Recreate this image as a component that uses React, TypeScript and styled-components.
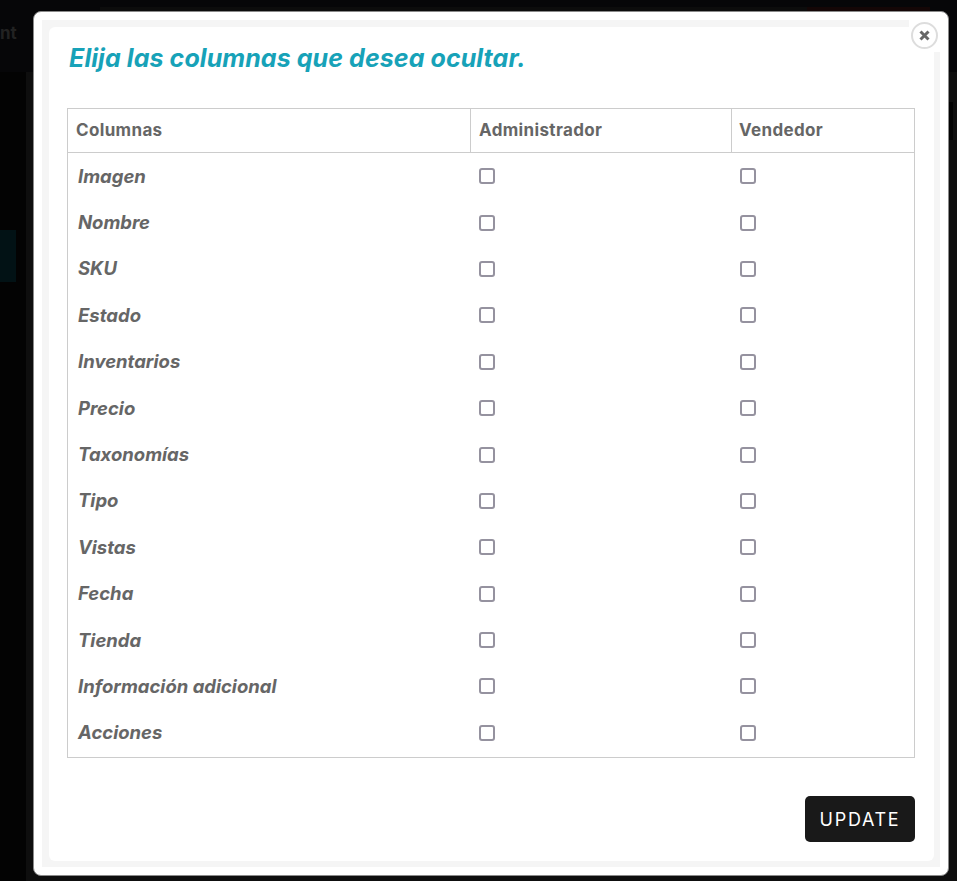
import React from 'react';
import styled, { createGlobalStyle } from 'styled-components';

const ROWS = [
  'Imagen',
  'Nombre',
  'SKU',
  'Estado',
  'Inventarios',
  'Precio',
  'Taxonomías',
  'Tipo',
  'Vistas',
  'Fecha',
  'Tienda',
  'Información adicional',
  'Acciones',
];

const GlobalStyle = createGlobalStyle`
  html, body {
    margin: 0;
    height: 100%;
    background: #050505;
    overflow: hidden;
  }
`;

const Page = styled.div`
  position: relative;
  height: 881px;
  display: grid;
  grid-template-rows: 72px 1fr;
  font-family: 'Inter', 'Liberation Sans', sans-serif;
`;

const PageHeader = styled.div`
  display: flex;
  align-items: center;
  padding-bottom: 6px;
  box-sizing: border-box;
  font-size: 17px;
  font-weight: 700;
  color: #222;
  background:
    linear-gradient(#0c0c0c, #0c0c0c) 100px 7px / 707px 5px no-repeat,
    linear-gradient(#140606, #140606) 807px 7px / 123px 5px no-repeat,
    #060608;
`;

const PageBody = styled.div`
  display: flex;
  background: #0e0e0e;
`;

const Sidebar = styled.div`
  width: 26px;
  padding-top: 158px;
  box-sizing: border-box;
  background: #030303;
`;

const SidebarActive = styled.div`
  width: 16px;
  height: 52px;
  background: #021215;
`;

const RightRail = styled.div`
  margin-left: auto;
  width: 8px;
  padding-top: 30px;
  box-sizing: border-box;
`;

const RailBlock = styled.div`
  width: 4px;
  height: 38px;
  background: #020202;
`;

const Modal = styled.div`
  position: absolute;
  left: 33px;
  top: 11px;
  width: 916px;
  height: 865px;
  box-sizing: border-box;
  padding: 8px;
  background: #fff;
  border: 1px solid #8a8a8a;
  border-radius: 8px;
`;

const Band = styled.div`
  height: 100%;
  box-sizing: border-box;
  padding: 7px 6px 6px 7px;
  background: #f5f5f5;
`;

const Content = styled.div`
  height: 100%;
  box-sizing: border-box;
  padding: 17px 19px 19px 18px;
  background: #fff;
  border-radius: 6px;
  display: flex;
  flex-direction: column;
`;

const Title = styled.h2`
  margin: 0 0 36px 2px;
  height: 28px;
  line-height: 28px;
  font-size: 25px;
  font-weight: 700;
  font-style: italic;
  letter-spacing: 0.08px;
  color: #17a2b8;
`;

const Table = styled.div`
  border: 1px solid #ccc;
  padding-bottom: 0.8px;
  display: grid;
  grid-template-columns: 403px 261px 1fr;
  grid-template-rows: 44px;
  grid-auto-rows: 46.4px;
  color: #666;
`;

const HeadCell = styled.div<{ $last?: boolean }>`
  box-sizing: border-box;
  padding: 0 8px 1px ${(p) => (p.$last ? '7px' : '8px')};
  display: flex;
  align-items: center;
  font-size: 17px;
  font-weight: 700;
  letter-spacing: 0.35px;
  border-bottom: 1px solid #ccc;
  border-right: ${(p) => (p.$last ? 'none' : '1px solid #ccc')};
`;

const NameCell = styled.div`
  padding: 0 0 1px 10px;
  display: flex;
  align-items: center;
  font-size: 18.5px;
  font-weight: 700;
  font-style: italic;
`;

const BoxCell = styled.div<{ $last?: boolean }>`
  padding-left: ${(p) => (p.$last ? '7.5px' : '8px')};
  display: flex;
  align-items: center;
`;

const Check = styled.input.attrs({ type: 'checkbox' })`
  appearance: none;
  margin: 0;
  width: 16px;
  height: 16px;
  box-sizing: border-box;
  background: #fff;
  border: 2px solid #95929f;
  border-radius: 3px;
`;

const Footer = styled.div`
  margin-top: auto;
  display: flex;
  justify-content: flex-end;
`;

const UpdateButton = styled.button`
  width: 110px;
  height: 46px;
  border: 0;
  border-radius: 5px;
  background: #191919;
  color: #fff;
  font-family: 'Inter', 'Liberation Sans', sans-serif;
  font-size: 18px;
  font-weight: 400;
  letter-spacing: 1.7px;
`;

const CloseCorner = styled.div`
  position: absolute;
  top: 8px;
  right: 8px;
  width: 31px;
  height: 32px;
  background: #fff;
  display: flex;
  align-items: center;
  justify-content: center;
`;

const CloseButton = styled.button`
  width: 27px;
  height: 27px;
  margin: -1px 0 0 0;
  padding: 0;
  border: 2px solid #ddd;
  border-radius: 50%;
  background: #fff;
  display: flex;
  align-items: center;
  justify-content: center;
`;

export default function App() {
  return (
    <Page>
      <GlobalStyle />
      <PageHeader>nt</PageHeader>
      <PageBody>
        <Sidebar>
          <SidebarActive />
        </Sidebar>
        <RightRail>
          <RailBlock />
        </RightRail>
      </PageBody>
      <Modal>
        <Band>
          <Content>
            <Title>Elija las columnas que desea ocultar.</Title>
            <Table>
              <HeadCell>Columnas</HeadCell>
              <HeadCell>Administrador</HeadCell>
              <HeadCell $last>Vendedor</HeadCell>
              {ROWS.map((row) => (
                <React.Fragment key={row}>
                  <NameCell>{row}</NameCell>
                  <BoxCell>
                    <Check />
                  </BoxCell>
                  <BoxCell $last>
                    <Check />
                  </BoxCell>
                </React.Fragment>
              ))}
            </Table>
            <Footer>
              <UpdateButton>UPDATE</UpdateButton>
            </Footer>
          </Content>
        </Band>
        <CloseCorner>
          <CloseButton aria-label="Cerrar">
            <svg width="13" height="13" viewBox="0 0 13 13">
              <path d="M2.5 2.5l8 8M10.5 2.5l-8 8" stroke="#666" strokeWidth="3" />
            </svg>
          </CloseButton>
        </CloseCorner>
      </Modal>
    </Page>
  );
}
